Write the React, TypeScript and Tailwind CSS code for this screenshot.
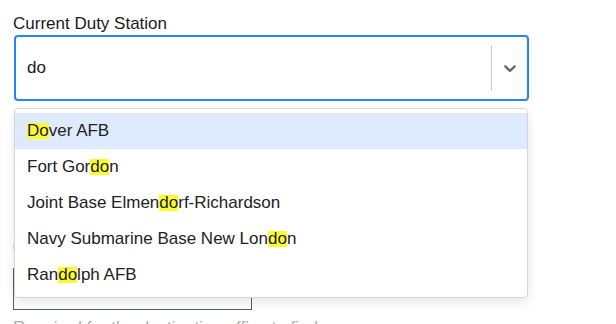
import React from 'react';

type Part = { text: string; hit?: boolean };

const options: Part[][] = [
  [{ text: 'Do', hit: true }, { text: 'ver AFB' }],
  [{ text: 'Fort Gor' }, { text: 'do', hit: true }, { text: 'n' }],
  [{ text: 'Joint Base Elmen' }, { text: 'do', hit: true }, { text: 'rf-Richardson' }],
  [{ text: 'Navy Submarine Base New Lon' }, { text: 'do', hit: true }, { text: 'n' }],
  [{ text: 'Ran' }, { text: 'do', hit: true }, { text: 'lph AFB' }],
];

const Chevron = () => (
  <svg width="20" height="20" viewBox="0 0 20 20" className="fill-[#666666]">
    <path d="M4.516 7.548c0.436-0.446 1.043-0.481 1.576 0l3.908 3.747 3.908-3.747c0.533-0.481 1.141-0.446 1.574 0 0.436 0.445 0.408 1.197 0 1.615-0.406 0.418-4.695 4.502-4.695 4.502-0.217 0.223-0.502 0.335-0.787 0.335s-0.57-0.112-0.789-0.335c0 0-4.287-4.084-4.695-4.502s-0.436-1.17 0-1.615z" />
  </svg>
);

const App = () => {
  return (
    <div className="h-[324px] overflow-hidden bg-white pl-[13px] pt-[13px] font-['Liberation_Sans',Arial,sans-serif] text-[17px] text-[#1b1b1b]">
      {/* Duty station select */}
      <label className="block leading-[22px]">Current Duty Station</label>
      <div className="relative ml-px w-[515px]">
        <div className="flex h-[66px] items-center rounded-[4px] border-2 border-[#2684ff] bg-white">
          <div className="flex-1 pl-[11px] leading-[20px]">do</div>
          <div className="h-[46px] w-px bg-[#cccccc]" />
          <div className="flex w-[35px] items-center justify-center">
            <Chevron />
          </div>
        </div>

        {/* Menu */}
        <div className="absolute left-0 top-[73px] z-10 w-[514px] rounded-[4px] border border-[#d6d6d6] bg-white py-[4px] shadow-[0_4px_11px_rgba(0,0,0,0.1)]">
          {options.map((parts, i) => (
            <div
              key={i}
              className={`flex h-[36px] items-center px-[12px] leading-[20px] text-[#222222] ${i === 0 ? 'bg-[#deebff]' : ''}`}
            >
              <span>
                {parts.map((p, j) =>
                  p.hit ? (
                    <mark
                      key={j}
                      className="bg-transparent bg-[linear-gradient(#fbfb2f,#fbfb2f)] bg-[length:100%_16px] bg-[position:0_2px] bg-no-repeat text-[#222222]"
                    >
                      {p.text}
                    </mark>
                  ) : (
                    <span key={j}>{p.text}</span>
                  )
                )}
              </span>
            </div>
          ))}
        </div>
      </div>

      {/* Fields behind the menu */}
      <label className="mt-[42px] block leading-[22px]">New Duty Station</label>
      <label className="mt-[72px] block leading-[22px]">Current ZIP Code</label>
      <input
        readOnly
        className="mt-[9px] block h-[42px] w-[239px] border border-[#565c65] bg-white px-2"
      />
      <p className="mt-[7px] leading-[22px] text-[#a9aeb1]">Required for the destination office to find you</p>
    </div>
  );
};

export default App;
